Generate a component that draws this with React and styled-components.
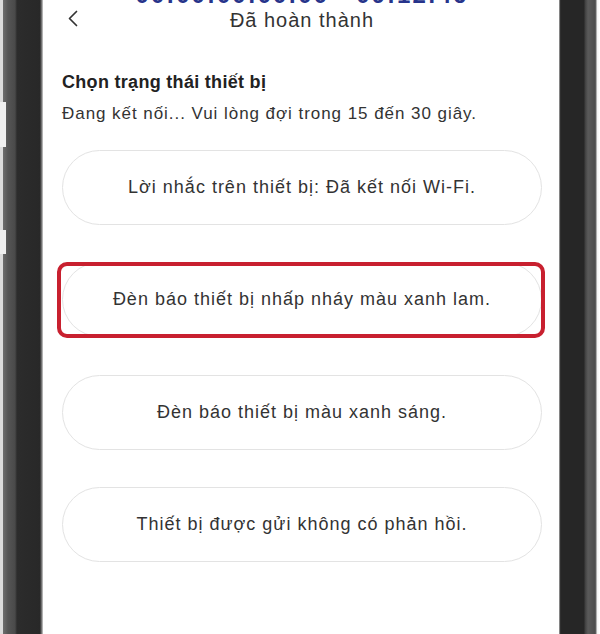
import styled, { createGlobalStyle } from "styled-components";

const GlobalStyle = createGlobalStyle`
    html, body {
        margin: 0;
        padding: 0;
        background: #fff;
    }
    body {
        font-family: "Liberation Sans", Arial, sans-serif;
    }
`

const Phone = styled.div`
    display: flex;
    width: 600px;
    height: 634px;
    overflow: hidden;
`
const Bezel = styled.div`
    flex: 0 0 ${props => props.side === "left" ? 43 : 41}px;
    background: ${props => props.side === "left"
        ? `linear-gradient(#f0f0f0, #f0f0f0) 0 102px / 6px 45px no-repeat,
           linear-gradient(#f0f0f0, #f0f0f0) 0 230px / 6px 24px no-repeat,
           linear-gradient(to right, #dcdcdc 0, #dcdcdc 3px, #6e6e6e 3px, #555 8px, #4a4a4a 15px, #2c2c2c 17px, #282828 40px, #8a8a8a 42px, #d8d8d8 43px)`
        : `linear-gradient(to right, #cfcfcf 0, #3a3a3a 1px, #262626 2px, #262626 25px, #3f3f3f 26px, #5a5a5a 29px, #4c4c4c 36px, #6a6a6a 37px, #f2f2f2 38px, #fff 41px)`};
`
const Screen = styled.div`
    flex: 1;
    display: flex;
    flex-direction: column;
    background: #fff;
    padding: 0 17px 0 19px;
`
const StatusStrip = styled.div`
    height: 3px;
    overflow: hidden;
    display: flex;
    justify-content: center;
    align-items: flex-end;
`
const StatusText = styled.span`
    font-size: 24px;
    line-height: 24px;
    font-weight: bold;
    letter-spacing: 2px;
    color: #27348b;
    margin-bottom: -4px;
    white-space: nowrap;
`
const Header = styled.div`
    display: grid;
    grid-template-columns: 1fr auto 1fr;
    align-items: center;
    height: 35px;
`
const BackButton = styled.div`
    align-self: start;
    margin: 7px 0 0 5px;
    width: 12px;
    height: 17px;
    color: #333;
`
const Title = styled.div`
    font-size: 20px;
    letter-spacing: 1px;
    color: #333;
`
const Heading = styled.div`
    margin-top: 34px;
    font-size: 18px;
    line-height: 20px;
    letter-spacing: 0.3px;
    font-weight: bold;
    color: #222;
`
const Subtitle = styled.div`
    margin-top: 12px;
    font-size: 17px;
    line-height: 20px;
    letter-spacing: 0.95px;
    color: #333;
    white-space: nowrap;
`
const OptionList = styled.div`
    margin-top: 25.5px;
    display: flex;
    flex-direction: column;
    gap: 37.5px;
`
const Option = styled.div`
    position: relative;
    height: 75px;
    box-sizing: border-box;
    border: 1.5px solid #e3e3e3;
    border-radius: 38px;
    display: flex;
    align-items: center;
    justify-content: center;
    font-size: 18px;
    letter-spacing: 1px;
    color: #333;
    white-space: nowrap;
`
const Highlight = styled.div`
    position: absolute;
    top: -1px;
    bottom: -2px;
    left: -6px;
    right: -4px;
    border: 4px solid #c8202f;
    border-radius: 10px;
    pointer-events: none;
`

const options = [
    "Lời nhắc trên thiết bị: Đã kết nối Wi-Fi.",
    "Đèn báo thiết bị nhấp nháy màu xanh lam.",
    "Đèn báo thiết bị màu xanh sáng.",
    "Thiết bị được gửi không có phản hồi.",
]

export default function App() {
    return (
        <Phone>
            <GlobalStyle />
            <Bezel side="left" />
            <Screen>
                <StatusStrip>
                    <StatusText>00:00:00:00:00 - 09:12:46</StatusText>
                </StatusStrip>
                <Header>
                    <BackButton>
                        <svg width="12" height="17" viewBox="0 0 12 17" fill="none">
                            <path d="M9.5 1.5L2.5 8.5L9.5 15.5" stroke="currentColor" strokeWidth="1.7" strokeLinecap="round" strokeLinejoin="round" />
                        </svg>
                    </BackButton>
                    <Title>Đã hoàn thành</Title>
                    <div />
                </Header>
                <Heading>Chọn trạng thái thiết bị</Heading>
                <Subtitle>Đang kết nối... Vui lòng đợi trong 15 đến 30 giây.</Subtitle>
                <OptionList>
                    {options.map((text, i) => (
                        <Option key={i}>
                            {text}
                            {i === 1 && <Highlight />}
                        </Option>
                    ))}
                </OptionList>
            </Screen>
            <Bezel side="right" />
        </Phone>
    )
}
